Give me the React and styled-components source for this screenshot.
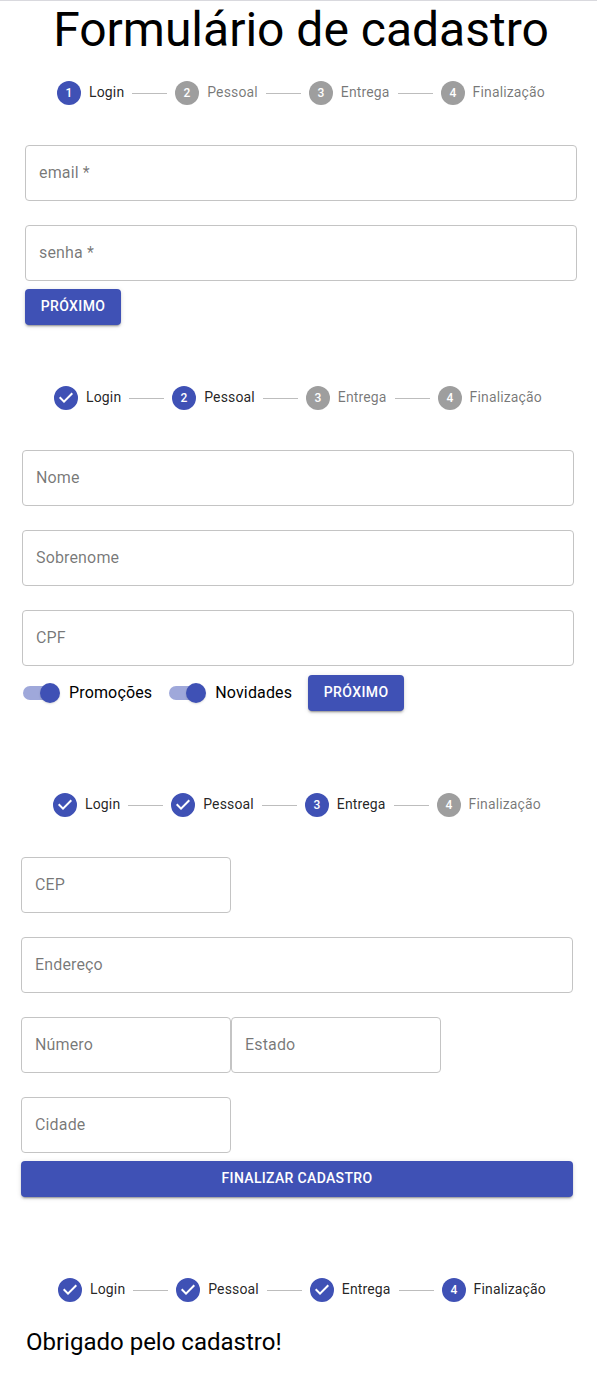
import React from "react";
import styled, { createGlobalStyle } from "styled-components";

const GlobalStyle = createGlobalStyle`
  *, *::before, *::after { box-sizing: border-box; }
  body {
    margin: 0;
    background: #fff;
    color: #000;
    font-family: Roboto, "Liberation Sans", sans-serif;
  }
`;

const Page = styled.main`
  height: 1381px;
  overflow: hidden;
  border-top: 1px solid #d9d9de;
`;

const Section = styled.section`
  display: flex;
  flex-direction: column;
  width: 552px;
  margin-left: ${(p) => p.$left}px;
  margin-top: ${(p) => p.$gap || 0}px;
`;

const Title = styled.h1`
  margin: 0;
  height: 56px;
  font-size: 48px;
  font-weight: 400;
  line-height: 58px;
  text-align: center;
  white-space: nowrap;
`;

const StepperBar = styled.div`
  display: flex;
  align-items: center;
  padding: 24px;
`;

const Step = styled.div`
  display: flex;
  align-items: center;
  gap: 8px;
  padding: 0 8px;
`;

const StepIcon = styled.svg`
  display: block;
  flex: none;
  width: 24px;
  height: 24px;
  color: ${(p) => (p.$on ? "#3f51b5" : "#9e9e9e")};

  text {
    fill: #fff;
    font-size: 12px;
    font-weight: 500;
    font-family: Roboto, "Liberation Sans", sans-serif;
  }
`;

const StepLabel = styled.span`
  padding-bottom: 2px;
  font-size: 14px;
  line-height: 20px;
  letter-spacing: 0.01071em;
  white-space: nowrap;
  font-weight: 400;
  color: ${(p) => (p.$on ? "rgba(0,0,0,0.87)" : "rgba(0,0,0,0.54)")};
`;

const Connector = styled.span`
  flex: 1 1 auto;
  border-top: 1px solid #bdbdbd;
`;

const Field = styled.div`
  display: flex;
  align-items: center;
  width: ${(p) => (p.$short ? "210px" : "100%")};
  height: 56px;
  margin: 16px 0 8px;
  padding: 0 13px;
  border: 1px solid #c4c4c4;
  border-radius: 4px;
  font-size: 16px;
  line-height: 1;
  letter-spacing: 0.00938em;
  color: rgba(0, 0, 0, 0.54);
`;

const Row = styled.div`
  display: flex;
  align-items: center;
`;

const Button = styled.button`
  display: block;
  width: ${(p) => (p.$full ? "100%" : "96px")};
  height: 36px;
  padding: 0 0 2px;
  border: 0;
  border-radius: 4px;
  background: #3f51b5;
  color: #fff;
  font: 500 14px/24px Roboto, "Liberation Sans", sans-serif;
  letter-spacing: ${(p) => (p.$full ? "0.024em" : "0.02857em")};
  text-transform: uppercase;
  box-shadow: 0 3px 1px -2px rgba(0, 0, 0, 0.2), 0 2px 2px 0 rgba(0, 0, 0, 0.14),
    0 1px 5px 0 rgba(0, 0, 0, 0.12);
`;

const SwitchLabel = styled.label`
  display: flex;
  align-items: center;
  height: 38px;
  margin-right: 16px;
  padding-left: 1px;
  gap: 9px;
  font-size: 16px;
  line-height: 24px;
  letter-spacing: 0.00938em;
`;

const Track = styled.span`
  display: flex;
  align-items: center;
  justify-content: flex-end;
  width: 37px;
  height: 14px;
  border-radius: 7px;
  background: linear-gradient(to right, #9fa8da 0 26px, transparent 26px);
`;

const Thumb = styled.span`
  flex: none;
  width: 20px;
  height: 20px;
  border-radius: 50%;
  background: #3f51b5;
  box-shadow: 0 1px 2px 0 rgba(0, 0, 0, 0.14);
`;

const Message = styled.h2`
  margin: 0;
  font-size: 24px;
  font-weight: 400;
  line-height: 32px;
`;

const steps = ["Login", "Pessoal", "Entrega", "Finalização"];

function Stepper({ active }) {
  return (
    <StepperBar>
      {steps.map((name, i) => (
        <React.Fragment key={name}>
          {i > 0 && <Connector />}
          <Step>
            <StepIcon $on={i <= active} viewBox="0 0 24 24">
              {i < active ? (
                <path
                  fill="currentColor"
                  d="M12 0a12 12 0 1 0 0 24a12 12 0 0 0 0-24zm-2 17l-5-5 1.4-1.4 3.6 3.6 7.6-7.6L19 8l-9 9z"
                />
              ) : (
                <>
                  <circle cx="12" cy="12" r="12" fill="currentColor" />
                  <text x="12" y="16" textAnchor="middle">{i + 1}</text>
                </>
              )}
            </StepIcon>
            <StepLabel $on={i <= active}>{name}</StepLabel>
          </Step>
        </React.Fragment>
      ))}
    </StepperBar>
  );
}

function Switch({ children }) {
  return (
    <SwitchLabel>
      <Track>
        <Thumb />
      </Track>
      {children}
    </SwitchLabel>
  );
}

export default function App() {
  return (
    <>
      <GlobalStyle />
      <Page>
        <Section $left={25}>
          <Title>Formulário de cadastro</Title>
          <Stepper active={0} />
          <Field>email *</Field>
          <Field>senha *</Field>
          <Button>Próximo</Button>
        </Section>
        <Section $left={22} $gap={37}>
          <Stepper active={1} />
          <Field>Nome</Field>
          <Field>Sobrenome</Field>
          <Field>CPF</Field>
          <Row>
            <Switch>Promoções</Switch>
            <Switch>Novidades</Switch>
            <Button>Próximo</Button>
          </Row>
        </Section>
        <Section $left={21} $gap={57}>
          <Stepper active={2} />
          <Field $short>CEP</Field>
          <Field>Endereço</Field>
          <Row>
            <Field $short>Número</Field>
            <Field $short>Estado</Field>
          </Row>
          <Field $short>Cidade</Field>
          <Button $full>Finalizar cadastro</Button>
        </Section>
        <Section $left={26} $gap={57}>
          <Stepper active={3} />
          <Message>Obrigado pelo cadastro!</Message>
        </Section>
      </Page>
    </>
  );
}
